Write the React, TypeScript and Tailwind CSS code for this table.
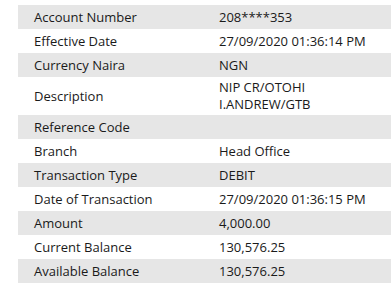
import React from "react";

const rows: [string, React.ReactNode][] = [
  ["Account Number", "208****353"],
  ["Effective Date", "27/09/2020 01:36:14 PM"],
  ["Currency Naira", "NGN"],
  [
    "Description",
    <>
      <span className="block">NIP CR/OTOHI</span>
      <span className="block">I.ANDREW/GTB</span>
    </>,
  ],
  ["Reference Code", ""],
  ["Branch", "Head Office"],
  ["Transaction Type", "DEBIT"],
  ["Date of Transaction", "27/09/2020 01:36:15 PM"],
  ["Amount", "4,000.00"],
  ["Current Balance", "130,576.25"],
  ["Available Balance", "130,576.25"],
];

export default function App() {
  return (
    <div
      className="w-[391px] h-[288px] bg-white pt-[5px] pl-[18px] text-[13px] text-[#1a1a1a]"
      style={{ fontFamily: '"Open Sans", "Noto Sans", sans-serif' }}
    >
      <div className="flex flex-col">
        {rows.map(([label, value], i) => (
          <div
            key={label}
            className={`flex items-center ${i % 2 === 0 ? "bg-[#e6e6e6]" : "bg-white"} ${
              label === "Description" ? "h-[38px]" : "h-[24px]"
            }`}
          >
            <div className="w-[185px] pl-[16px] shrink-0 leading-[18px]">{label}</div>
            <div className="flex-1 pl-[16px] leading-[17px] whitespace-nowrap">{value}</div>
          </div>
        ))}
      </div>
    </div>
  );
}
